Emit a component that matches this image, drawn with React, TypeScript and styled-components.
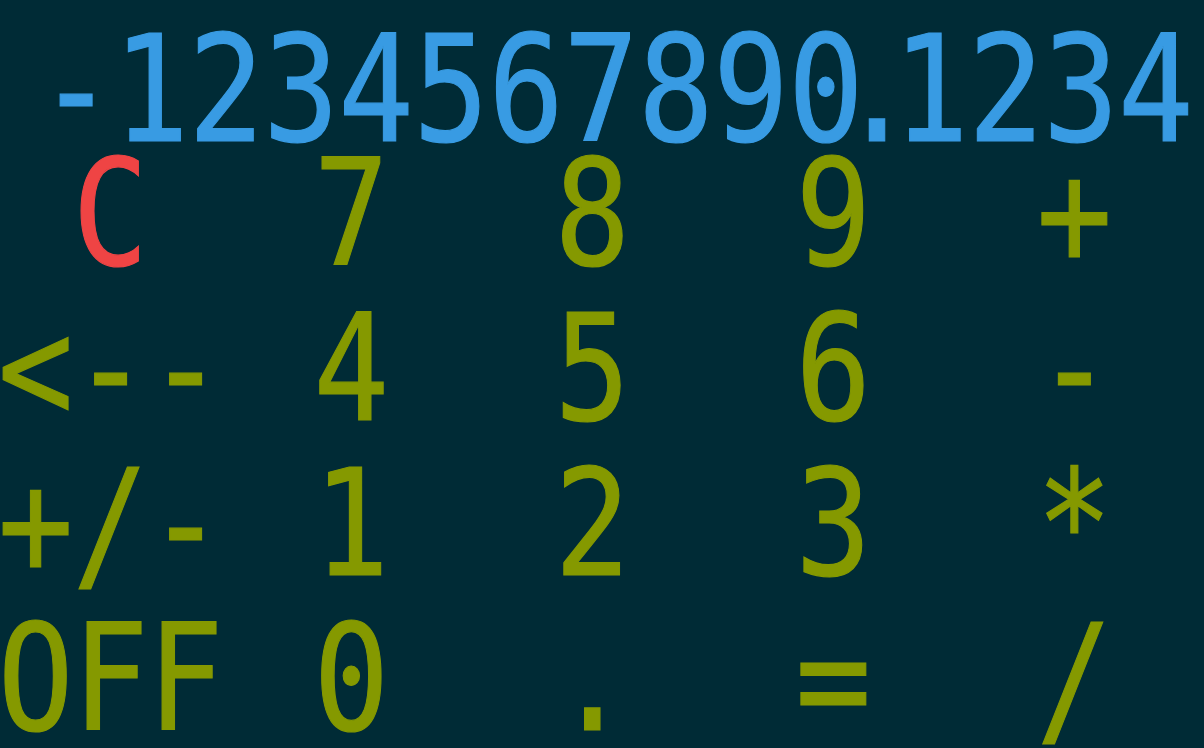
import React from "react";
import styled, { createGlobalStyle } from "styled-components";

const GlobalStyle = createGlobalStyle`
  html, body {
    margin: 0;
    padding: 0;
    background: #002b36;
  }
  body {
    font-family: "DejaVu Sans Mono", "Liberation Mono", monospace;
    overflow: hidden;
  }
`;

const Screen = styled.div`
  width: 1204px;
  height: 748px;
  background: #002b36;
  display: flex;
  flex-direction: column;
  overflow: hidden;
`;

const glyphText = `
  font-family: "DejaVu Sans Mono", "Liberation Mono", monospace;
  font-size: 148px;
  font-weight: 400;
  line-height: 108px;
  letter-spacing: -0.9px;
  -webkit-text-stroke: 1.2px currentColor;
  white-space: pre;
`;

const Display = styled.div`
  height: 144px;
  flex: none;
  box-sizing: border-box;
  padding: 36px 13px 0 0;
  display: flex;
  justify-content: flex-end;
  align-items: flex-start;
  transform: scaleX(0.85);
  transform-origin: right top;
`;

const Readout = styled.span`
  ${glyphText}
  flex: none;
  color: #389be3;
`;

const Point = styled.span`
  margin-left: -28px;
  letter-spacing: -25.8px;
`;

const Keypad = styled.div`
  flex: 1;
  display: grid;
  grid-template-columns: repeat(5, 1fr);
  grid-auto-rows: 155px;
`;

const Key = styled.button<{ $danger?: boolean }>`
  appearance: none;
  background: none;
  border: 0;
  margin: 0 0 0 -2px;
  padding: 16px 0 0;
  width: 225px;
  box-sizing: border-box;
  align-self: start;
  display: flex;
  justify-content: center;
  cursor: pointer;
  color: ${(p) => (p.$danger ? "#ef4444" : "#859900")};
`;

const Label = styled.span`
  ${glyphText}
  display: inline-block;
  flex: none;
  transform: scaleX(0.85);
  transform-origin: center top;
`;

type KeyDef = { label: string; danger?: boolean };

const rows: KeyDef[][] = [
  [{ label: "C", danger: true }, { label: "7" }, { label: "8" }, { label: "9" }, { label: "+" }],
  [{ label: "<--" }, { label: "4" }, { label: "5" }, { label: "6" }, { label: "-" }],
  [{ label: "+/-" }, { label: "1" }, { label: "2" }, { label: "3" }, { label: "*" }],
  [{ label: "OFF" }, { label: "0" }, { label: "." }, { label: "=" }, { label: "/" }],
];

export default function App() {
  return (
    <>
      <GlobalStyle />
      <Screen>
        <Display>
          <Readout>
            -1234567890<Point>.</Point>1234
          </Readout>
        </Display>
        <Keypad>
          {rows.flat().map((k, i) => (
            <Key key={i} $danger={k.danger} type="button">
              <Label>{k.label}</Label>
            </Key>
          ))}
        </Keypad>
      </Screen>
    </>
  );
}
